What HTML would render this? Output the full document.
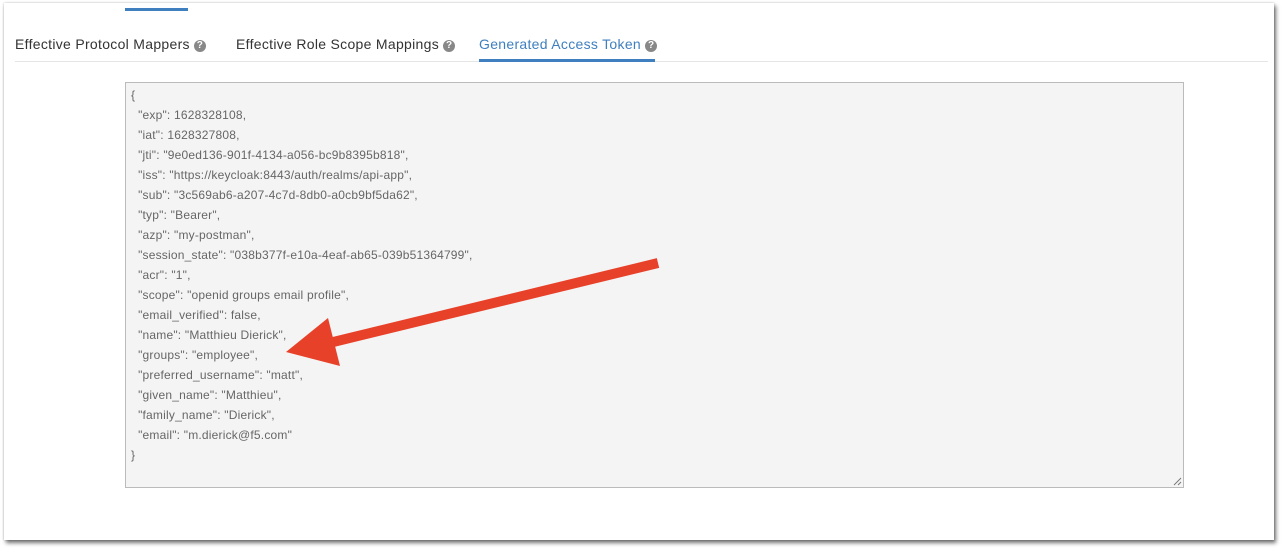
<!DOCTYPE html>
<html><head><meta charset="utf-8"><style>
body{margin:0;width:1282px;height:548px;background:#fff;position:relative;overflow:hidden;font-family:"Liberation Sans",sans-serif}
.panel{position:absolute;left:4px;top:3px;width:1270px;height:537px;background:#fff;box-shadow:2px 3px 4px rgba(0,0,0,.55),0 0 2px rgba(0,0,0,.25)}
.topbar{position:absolute;left:125px;top:8px;width:63px;height:3px;background:#3f7fbf}
.tab{position:absolute;top:36px;font-size:14px;color:#333;letter-spacing:0.3px;white-space:nowrap}
.q{display:inline-block;width:12px;height:12px;border-radius:50%;background:#888;color:#fff;font-size:10px;font-weight:bold;text-align:center;line-height:12px;vertical-align:1px;margin-left:4px;letter-spacing:0}
.sep{position:absolute;left:15px;top:61px;width:1253px;height:1px;background:#e5e5e5}
.act{position:absolute;left:479px;top:59px;width:176px;height:3px;background:#3f7fbf}
.ta{position:absolute;left:125px;top:82px;width:1057px;height:404px;background:#f4f4f4;border:1px solid #bbb}
.code{position:absolute;left:131px;top:85px;font-size:12px;line-height:20px;color:#666;white-space:pre;letter-spacing:0.2px}
</style></head><body>
<div class="panel"></div>
<div class="topbar"></div>
<div class="tab" style="left:15px">Effective Protocol Mappers<span class="q">?</span></div>
<div class="tab" style="left:236px">Effective Role Scope Mappings<span class="q">?</span></div>
<div class="tab" style="left:479px;color:#3f7fbf">Generated Access Token<span class="q">?</span></div>
<div class="sep"></div>
<div class="act"></div>
<div class="ta"></div>
<div class="code">{
  "exp": 1628328108,
  "iat": 1628327808,
  "jti": "9e0ed136-901f-4134-a056-bc9b8395b818",
  "iss": "https://keycloak:8443/auth/realms/api-app",
  "sub": "3c569ab6-a207-4c7d-8db0-a0cb9bf5da62",
  "typ": "Bearer",
  "azp": "my-postman",
  "session_state": "038b377f-e10a-4eaf-ab65-039b51364799",
  "acr": "1",
  "scope": "openid groups email profile",
  "email_verified": false,
  "name": "Matthieu Dierick",
  "groups": "employee",
  "preferred_username": "matt",
  "given_name": "Matthieu",
  "family_name": "Dierick",
  "email": "m.dierick@f5.com"
}</div>
<svg style="position:absolute;left:0;top:0" width="1282" height="548">
<g stroke="#777" stroke-width="1"><line x1="1174" y1="485" x2="1181" y2="478"/><line x1="1178" y1="485" x2="1181" y2="482"/></g>
<line x1="658" y1="263" x2="325" y2="344" stroke="#e8412a" stroke-width="10"/>
<polygon points="286,352 328,318 340,366" fill="#e8412a"/>
</svg>
</body></html>
